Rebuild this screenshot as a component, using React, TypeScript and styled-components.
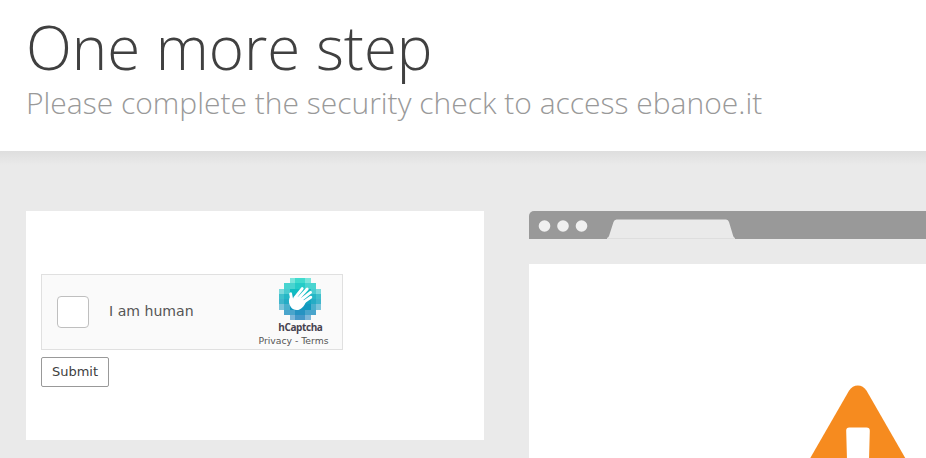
import styled, { createGlobalStyle } from 'styled-components';

const GlobalStyle = createGlobalStyle`
    * { box-sizing: border-box; }

    body {
        margin: 0;
        background: #fff;
        color: #404040;
        font-family: "Open Sans", sans-serif;
        overflow: hidden;
    }
`;

const Page = styled.div`
    height: 458px;
    display: flex;
    flex-direction: column;
    overflow: hidden;
`;

const Header = styled.header`
    flex: 0 0 151px;
    padding: 11px 26px 0;
`;

const Title = styled.h1`
    margin: 0;
    font-size: 60px;
    font-weight: 300;
    line-height: 72px;
    white-space: nowrap;
`;

const Subtitle = styled.h2`
    margin: 0;
    color: #999;
    font-size: 30px;
    font-weight: 300;
    line-height: 39px;
    white-space: nowrap;
`;

const Highlight = styled.main`
    flex: 1;
    display: flex;
    align-items: flex-start;
    gap: 45px;
    padding: 60px 0 0 26px;
    background: linear-gradient(#dedede, #eaeaea 14px);
`;

const CaptchaPanel = styled.form`
    flex: 0 0 458px;
    height: 229px;
    padding: 63px 15px 0;
    background: #fff;
`;

const CaptchaWidget = styled.div`
    display: flex;
    align-items: center;
    width: 302px;
    height: 76px;
    margin-bottom: 7px;
    padding: 0 13px 0 15px;
    border: 1px solid #e0e0e0;
    background: #fafafa;
    font-family: "DejaVu Sans", sans-serif;
`;

const Checkbox = styled.span`
    width: 32px;
    height: 32px;
    border: 1px solid #bfbfbf;
    border-radius: 4px;
    background: #fff;
`;

const CheckLabel = styled.span`
    flex: 1;
    margin-left: 20px;
    padding-bottom: 2px;
    color: #555;
    font-size: 14.1px;
    line-height: 18px;
`;

const Brand = styled.div`
    display: flex;
    flex-direction: column;
    align-items: flex-end;
    align-self: flex-start;
    width: 72px;
    padding-top: 3px;

    svg {
        display: block;
        margin-right: 8px;
    }
`;

const BrandName = styled.span`
    margin: 1px 6.5px 1px 0;
    color: #46424f;
    font-family: "Open Sans", sans-serif;
    font-size: 10px;
    font-weight: 700;
    letter-spacing: -0.4px;
    line-height: 13px;
`;

const BrandLinks = styled.span`
    margin-right: 0.5px;
    color: #555;
    font-size: 9.25px;
    line-height: 12px;
    white-space: nowrap;
`;

const SubmitButton = styled.button`
    width: 68px;
    height: 30px;
    padding: 0 0 2px;
    border: 1px solid #999;
    border-radius: 2px;
    background: #fff;
    color: #404040;
    font: 13px "DejaVu Sans", sans-serif;
`;

const BrowserWindow = styled.div`
    flex: 0 0 458px;
    display: flex;
    flex-direction: column;
    height: 300px;
`;

const BrowserBar = styled.div`
    display: flex;
    height: 27.5px;
    margin-bottom: 25.5px;
    border-radius: 5px 0 0 0;
    background: #999;
    overflow: hidden;
`;

const BrowserContent = styled.div`
    display: flex;
    flex: 1;
    padding: 121px 0 0 268px;
    background: #fff;
`;

// Rows of the pixelated badge: inset from the sides, in cells
const insets = [2, 1, 0, 0, 0, 0, 1, 2];
const rowColors = ['#12d3c3', '#12c8c3', '#12bdc2', '#12b1c1', '#12a5c0', '#1298bf', '#138abd', '#187fbd'];

const cellOpacity = (row: number, col: number) => {
    const edge = Math.min(row, col, 7 - row, 7 - col);
    const middle = (row > 2 && row < 5) || (col > 2 && col < 5);
    if (edge === 0) return middle ? 0.8 : 0.55;
    if (edge === 1) return middle ? 0.92 : 0.76;
    return 1;
};

const CaptchaLogo = () => (
    <svg width="42" height="42" viewBox="0 0 42 42">
        <g shapeRendering="crispEdges">
            {insets.map((inset, row) =>
                Array.from({ length: 8 - inset * 2 }, (_, i) => {
                    const col = i + inset;
                    return (
                        <rect
                            key={`${row}-${col}`}
                            x={col * 5.25}
                            y={row * 5.25}
                            width="5.25"
                            height="5.25"
                            fill={rowColors[row]}
                            opacity={cellOpacity(row, col)}
                        />
                    );
                })
            )}
        </g>
        <g stroke="#fff" strokeWidth="2.9" strokeLinecap="round" fill="none">
            <path d="M15.8 20 23.2 10.6M18 22 28.2 11M20 23.5 31.5 14.4M22 26 31.8 19.2" />
            <path d="M11.6 15.8 12.8 22" />
        </g>
        <path
            d="M16.8 17.6 13.8 21 10.5 19.5C9.3 23 10 26.6 12 29.3 14 32 17.8 33 21 31.2 23.5 29.8 26 27 27 23.5L20.5 20Z"
            fill="#fff"
        />
    </svg>
);

const BrowserControls = () => (
    <svg width="220" height="28" viewBox="0 0 220 28">
        {[15.5, 34, 52.5].map(x => <circle key={x} cx={x} cy="15" r="5.8" fill="#f0f0f0" />)}
        <path d="M78 27Q79.5 26.5 80 25L84.5 11Q85.3 8.5 87.5 8.5H197Q199.3 8.5 200 11L204.2 25Q204.6 26.5 206 27Z" fill="#eaeaea" />
        <path d="M78 27.5H206" stroke="#dedede" />
    </svg>
);

const WarningIcon = () => (
    <svg width="122" height="90" viewBox="0 0 122 90">
        <path d="M52 5.8Q55.5 .5 60.8 .5T69.6 5.8L118 90H3.5Z" fill="#f68b1f" />
        <path d="M49.2 46Q49 42.5 52.3 42.5H69.5Q73 42.5 72.8 46L71.6 90H50.4Z" fill="#fff" />
    </svg>
);

const Captcha = () => (
    <CaptchaPanel>
        <CaptchaWidget>
            <Checkbox />
            <CheckLabel>I am human</CheckLabel>
            <Brand>
                <CaptchaLogo />
                <BrandName>hCaptcha</BrandName>
                <BrandLinks>Privacy - Terms</BrandLinks>
            </Brand>
        </CaptchaWidget>
        <SubmitButton type="button">Submit</SubmitButton>
    </CaptchaPanel>
);

const App = () => (
    <Page>
        <GlobalStyle />
        <Header>
            <Title>One more step</Title>
            <Subtitle>Please complete the security check to access ebanoe.it</Subtitle>
        </Header>
        <Highlight>
            <Captcha />
            <BrowserWindow>
                <BrowserBar>
                    <BrowserControls />
                </BrowserBar>
                <BrowserContent>
                    <WarningIcon />
                </BrowserContent>
            </BrowserWindow>
        </Highlight>
    </Page>
);

export default App;
